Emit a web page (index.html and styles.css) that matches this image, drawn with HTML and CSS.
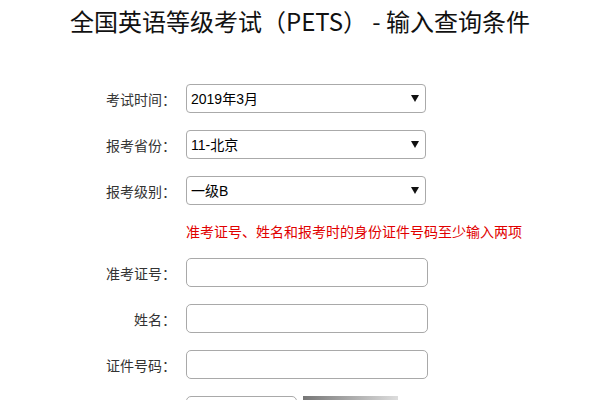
FILE: index.html
```html
<!DOCTYPE html>
<html lang="zh-CN">
<head>
<meta charset="utf-8">
<title>PETS 输入查询条件</title>
<link rel="stylesheet" href="styles.css">
</head>
<body>
<h1 class="title">全国英语等级考试（PETS） - 输入查询条件</h1>
<form class="form">
  <div class="row">
    <label class="label">考试时间：</label>
    <span class="select-wrap">
      <select class="select"><option>2019年3月</option></select>
      <svg class="arrow" width="8" height="7" viewBox="0 0 8 7"><path d="M0 0H8L4 7Z" fill="#111"/></svg>
    </span>
  </div>
  <div class="row">
    <label class="label">报考省份：</label>
    <span class="select-wrap">
      <select class="select"><option>11-北京</option></select>
      <svg class="arrow" width="8" height="7" viewBox="0 0 8 7"><path d="M0 0H8L4 7Z" fill="#111"/></svg>
    </span>
  </div>
  <div class="row">
    <label class="label">报考级别：</label>
    <span class="select-wrap">
      <select class="select"><option>一级B</option></select>
      <svg class="arrow" width="8" height="7" viewBox="0 0 8 7"><path d="M0 0H8L4 7Z" fill="#111"/></svg>
    </span>
  </div>
  <div class="row msg-row">
    <span class="label"></span>
    <span class="msg">准考证号、姓名和报考时的身份证件号码至少输入两项</span>
  </div>
  <div class="row">
    <label class="label">准考证号：</label>
    <input class="input" type="text">
  </div>
  <div class="row">
    <label class="label">姓名：</label>
    <input class="input" type="text">
  </div>
  <div class="row">
    <label class="label">证件号码：</label>
    <input class="input" type="text">
  </div>
  <div class="row">
    <label class="label"></label>
    <div class="captcha">
      <input class="input captcha-input" type="text">
      <span class="captcha-img"></span>
    </div>
  </div>
</form>
</body>
</html>
```

FILE: styles.css
```css
html, body {
  margin: 0;
  padding: 0;
  background: #fff;
}
body {
  font-family: "Noto Sans CJK SC", "Noto Sans", sans-serif;
  color: #222;
}
.title {
  margin: 6px 0 0;
  font-size: 24px;
  line-height: 29px;
  font-weight: normal;
  text-align: center;
  color: #111;
}
.form {
  margin-top: 49px;
  display: flex;
  flex-direction: column;
  gap: 17px;
}
.row {
  display: flex;
  align-items: center;
  gap: 10px;
  height: 29px;
}
.msg-row {
  height: 19px;
}
.label {
  width: 176px;
  flex: none;
  text-align: right;
  font-size: 14px;
  color: #333;
}
.select-wrap {
  position: relative;
  display: block;
  width: 240px;
  height: 29px;
}
.select {
  appearance: none;
  -webkit-appearance: none;
  box-sizing: border-box;
  width: 240px;
  height: 29px;
  margin: 0;
  padding: 0 0 0 4px;
  border: 1px solid #aaa;
  border-radius: 4px;
  background: #fff;
  font-family: "Liberation Sans", "Noto Sans CJK SC", sans-serif;
  font-size: 14px;
  color: #000;
}
.arrow {
  position: absolute;
  right: 7px;
  top: 11px;
  pointer-events: none;
}
.msg {
  font-size: 14px;
  line-height: 19px;
  color: #e10000;
  white-space: nowrap;
}
.input {
  box-sizing: border-box;
  width: 242px;
  height: 29px;
  margin: 0;
  padding: 0 4px;
  border: 1px solid #a9a9a9;
  border-radius: 5px;
  background: #fff;
  font-size: 14px;
}
.captcha {
  display: flex;
  gap: 6px;
  align-items: flex-start;
}
.captcha-input {
  width: 111px;
}
.captcha-img {
  display: block;
  width: 95px;
  height: 30px;
  background: linear-gradient(to right, #777, #ddd);
}
```
